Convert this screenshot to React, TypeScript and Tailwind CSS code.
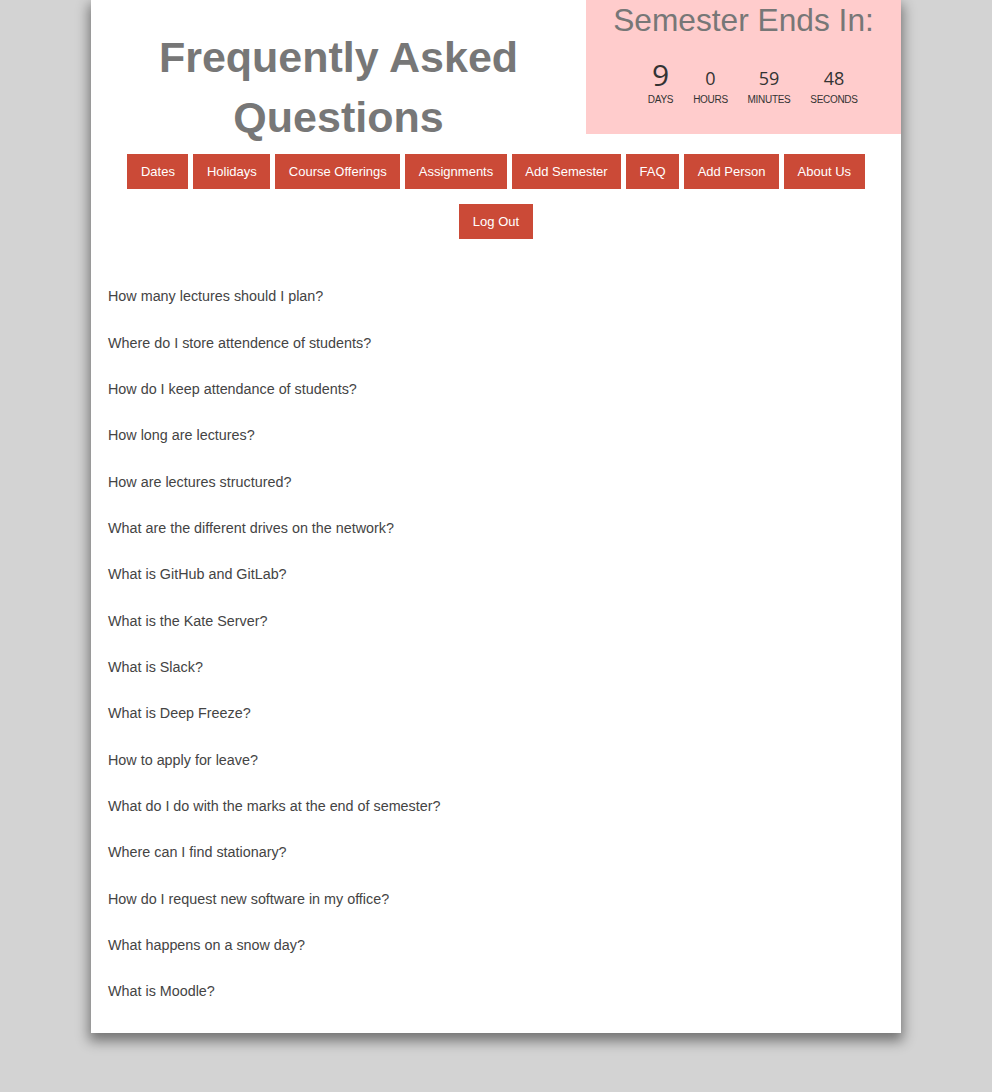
const navItems = ['Dates', 'Holidays', 'Course Offerings', 'Assignments', 'Add Semester', 'FAQ', 'Add Person', 'About Us'];

const questions = [
  'How many lectures should I plan?',
  'Where do I store attendence of students?',
  'How do I keep attendance of students?',
  'How long are lectures?',
  'How are lectures structured?',
  'What are the different drives on the network?',
  'What is GitHub and GitLab?',
  'What is the Kate Server?',
  'What is Slack?',
  'What is Deep Freeze?',
  'How to apply for leave?',
  'What do I do with the marks at the end of semester?',
  'Where can I find stationary?',
  'How do I request new software in my office?',
  'What happens on a snow day?',
  'What is Moodle?',
];

const countdown = [
  { value: '9', label: 'Days', width: 'w-[49px]', big: true },
  { value: '0', label: 'Hours', width: 'w-[51px]', big: false },
  { value: '59', label: 'Minutes', width: 'w-[66px]', big: false },
  { value: '48', label: 'Seconds', width: 'w-[64px]', big: false },
];

const NavButton = ({ label }: { label: string }) => (
  <a className="h-[35px] px-[13.5px] flex items-center bg-[#cb4a37] text-white text-[13px] cursor-pointer">
    {label}
  </a>
);

const App = () => {
  return (
    <div className="w-full min-h-screen bg-[#d3d3d3] font-['Liberation_Sans',Arial,sans-serif]">
      <div className="mx-auto w-[810px] bg-white shadow-[0_6px_12px_2px_rgba(0,0,0,0.45)]">
        {/* Header */}
        <div className="flex items-start">
          <h1 className="flex-1 pt-[27px] text-center text-[43px] leading-[60px] font-bold text-[#777]">
            Frequently Asked
            <br />
            Questions
          </h1>
          <div className="w-[315px] h-[134px] bg-[#ffcccc]">
            <h2 className="pt-[2px] text-center text-[31.7px] leading-[37px] text-[#777]">Semester Ends In:</h2>
            <div className="flex pl-[50px] mt-[17px] text-[#333]">
              {countdown.map((c) => (
                <div key={c.label} className={`${c.width} flex flex-col items-center`}>
                  <div className="h-[36px] flex items-end">
                    <span
                      className={`font-['Open_Sans',sans-serif] leading-none ${
                        c.big ? 'text-[30px] mb-[2px]' : 'text-[18px] mb-[5px]'
                      }`}
                    >
                      {c.value}
                    </span>
                  </div>
                  <span className="uppercase text-[10px] leading-[12px] mt-[2px] tracking-[-0.3px]">{c.label}</span>
                </div>
              ))}
            </div>
          </div>
        </div>

        {/* Nav */}
        <div className="mt-[7px] flex flex-col items-center gap-[15px]">
          <div className="flex gap-[5px]">
            {navItems.map((item) => (
              <NavButton key={item} label={item} />
            ))}
          </div>
          <div className="flex">
            <NavButton label="Log Out" />
          </div>
        </div>

        {/* Questions */}
        <div className="mt-[35px] pb-[18px] px-[17px] flex flex-col">
          {questions.map((q) => (
            <div key={q} className="h-[46.33px] flex items-center text-[14.35px] text-[#444] cursor-pointer">
              {q}
            </div>
          ))}
        </div>
      </div>
    </div>
  );
};

export default App;
